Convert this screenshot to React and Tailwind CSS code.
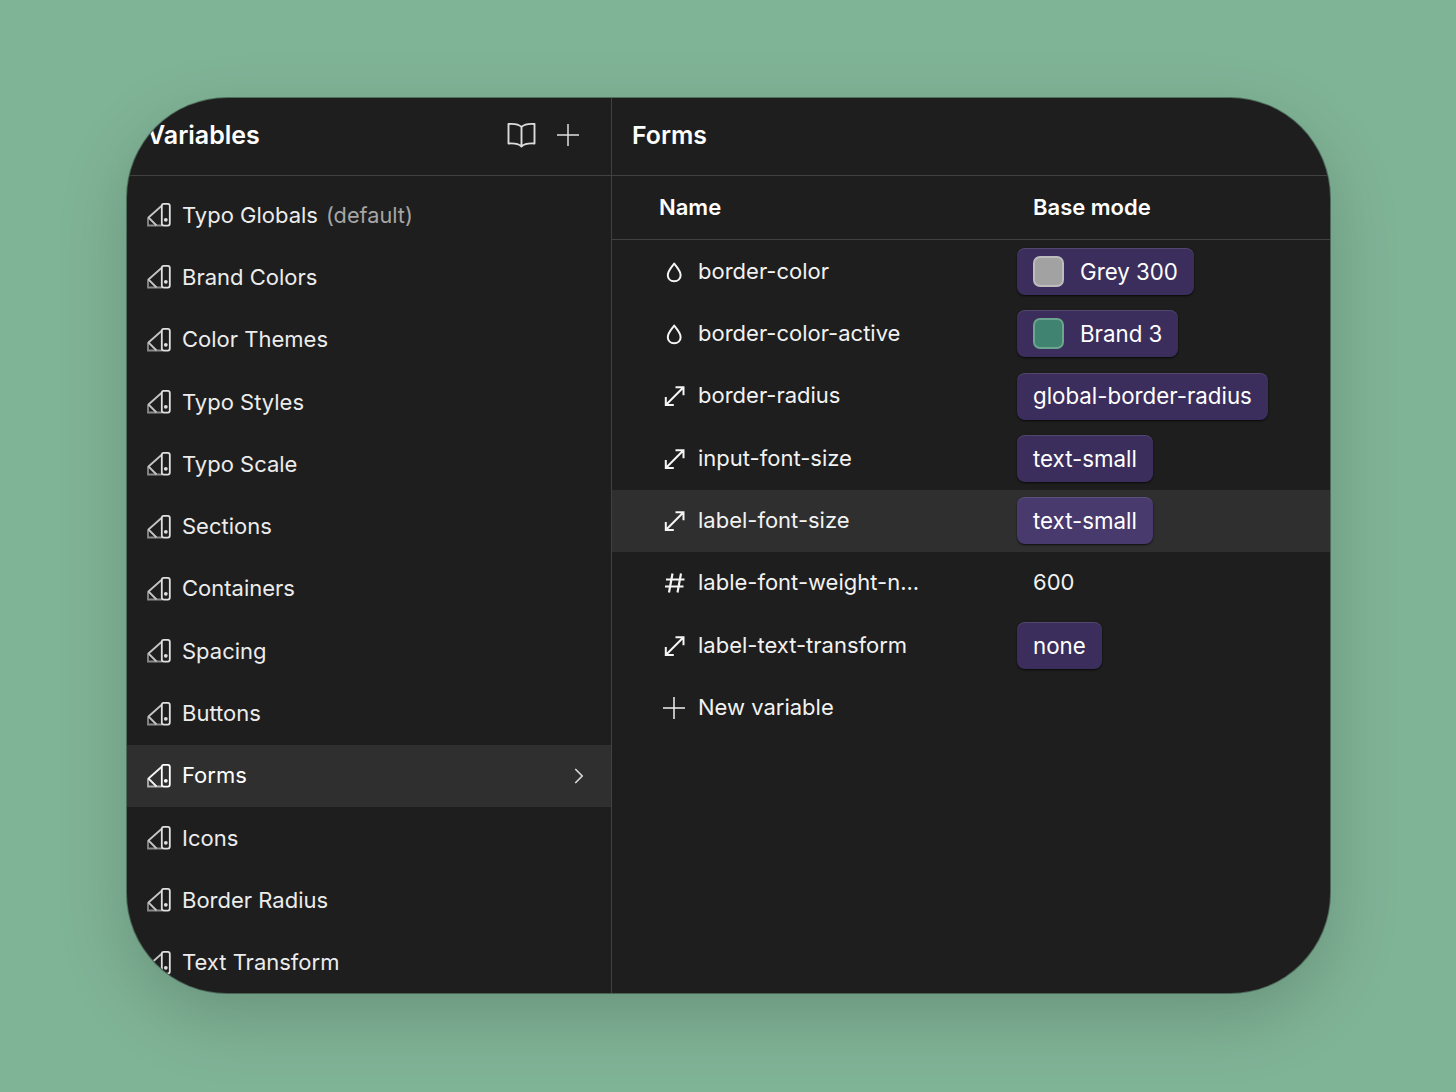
import { ChevronRight } from 'lucide-react';

const collections = [
  'Typo Globals',
  'Brand Colors',
  'Color Themes',
  'Typo Styles',
  'Typo Scale',
  'Sections',
  'Containers',
  'Spacing',
  'Buttons',
  'Forms',
  'Icons',
  'Border Radius',
  'Text Transform',
];

const variables = [
  { name: 'border-color', icon: 'drop', chip: 'Grey 300', swatch: 'grey' },
  { name: 'border-color-active', icon: 'drop', chip: 'Brand 3', swatch: 'green' },
  { name: 'border-radius', icon: 'size', chip: 'global-border-radius' },
  { name: 'input-font-size', icon: 'size', chip: 'text-small' },
  { name: 'label-font-size', icon: 'size', chip: 'text-small', active: true },
  { name: 'lable-font-weight-n...', icon: 'hash', value: '600' },
  { name: 'label-text-transform', icon: 'size', chip: 'none' },
];

function SwatchIcon({ active }) {
  return (
    <svg width="24" height="24" viewBox="0 0 24 24" fill="none" className="shrink-0">
      <path d="M1 14.5V22.5H15" stroke={active ? '#b0b0b0' : '#8a8a8a'} strokeWidth="1.8" />
      <path d="M15 2.5L1.5 14.5L9.5 22.5" stroke={active ? '#f2f2f2' : '#c4c4c4'} strokeWidth="1.8" strokeLinejoin="round" />
      <rect x="14.8" y="0.9" width="8" height="21.7" rx="2" stroke={active ? '#ffffff' : '#e0e0e0'} strokeWidth="1.8" />
      <circle cx="18.8" cy="16.8" r="1.9" fill={active ? '#ffffff' : '#e0e0e0'} />
    </svg>
  );
}

function VariableIcon({ type }) {
  if (type === 'drop') {
    return (
      <svg width="24" height="24" viewBox="0 0 24 24" fill="none" stroke="#f5f5f5" strokeWidth="2">
        <path d="M12.2 3.5C9.5 7.5 5.8 10.8 5.8 15.2C5.8 18.8 8.6 21.3 12.2 21.3C15.8 21.3 18.6 18.8 18.6 15.2C18.6 10.8 14.9 7.5 12.2 3.5Z" strokeLinejoin="round" />
      </svg>
    );
  }
  if (type === 'size') {
    return (
      <svg width="24" height="24" viewBox="0 0 24 24" fill="none" stroke="#f5f5f5" strokeWidth="2">
        <path d="M3.8 21L21.5 3.2M13.5 3.2H21.5V11.2M3.8 13V21H11.8" />
      </svg>
    );
  }
  if (type === 'hash') {
    return (
      <svg width="24" height="24" viewBox="0 0 24 24" fill="none" stroke="#f5f5f5" strokeWidth="2.2">
        <path d="M10.5 2.5L7 21.5M19 2.5L15.5 21.5M4 8.5H22.5M3 15.5H21.5" />
      </svg>
    );
  }
  return (
    <svg width="24" height="24" viewBox="0 0 24 24" fill="none" stroke="#f0f0f0" strokeWidth="1.5">
      <path d="M12 1V23M1 12H23" />
    </svg>
  );
}

function Chip({ label, swatch, active }) {
  return (
    <div className={`flex h-[47px] items-center gap-4 rounded-lg px-4 text-[22.3px] text-white shadow-[0_1px_2px_rgba(0,0,0,0.7),inset_0_1px_0_rgba(255,255,255,0.12)] ${active ? 'bg-[#483a6c]' : 'bg-[#3b2e5c]'}`}>
      {swatch === 'grey' && <span className="size-[31px] rounded-[7px] border-2 border-[#bdbdbd] bg-[#a2a2a2]" />}
      {swatch === 'green' && <span className="size-[31px] rounded-[7px] border-2 border-[#6ba48f] bg-[#3f8370]" />}
      <span>{label}</span>
    </div>
  );
}

export default function App() {
  return (
    <div className="h-[1092px] overflow-hidden bg-[#80b497] pl-[127px] pt-[98px] font-['Inter',sans-serif] text-[22px] leading-[30px]">
      <div className="flex h-[895px] w-[1203px] overflow-hidden rounded-[100px] bg-[#1e1e1e] shadow-[0_0_0_1px_rgba(0,0,0,0.35),0_24px_70px_rgba(0,0,0,0.18)]">
        <aside className="flex w-[485px] shrink-0 flex-col border-r border-[#414141]">
          <header className="flex h-[78px] shrink-0 items-center justify-between border-b border-[#414141] pb-[3px] pl-5 pr-[31px]">
            <h2 className="text-[25px] font-semibold text-white">Variables</h2>
            <div className="flex items-center gap-[20px]">
              <svg width="29" height="26" viewBox="0 0 29 26" fill="none" stroke="#dcdcdc" strokeWidth="1.9">
                <path d="M14.5 5C12 2.5 8 1.5 1.5 2V21.5C8 21 12 22 14.5 24.5C17 22 21 21 27.5 21.5V2C21 1.5 17 2.5 14.5 5ZM14.5 5V24.5" strokeLinejoin="round" />
              </svg>
              <svg width="24" height="24" viewBox="0 0 24 24" fill="none" stroke="#e0e0e0" strokeWidth="1.5">
                <path d="M12 1V23M1 12H23" />
              </svg>
            </div>
          </header>
          <ul className="flex flex-col pt-2">
            {collections.map((name, i) => {
              const active = name === 'Forms';
              return (
                <li key={name} className={`flex h-[62.3px] shrink-0 items-center gap-[11px] pl-5 pr-[19px] ${active ? 'bg-[#2f2f2f] text-white' : 'text-[#ececec]'}`}>
                  <SwatchIcon active={active} />
                  <span className="pb-px">{name}</span>
                  {i === 0 && <span className="ml-[-3px] pb-px text-[21.7px] text-[#a6a6a6]">(default)</span>}
                  {active && <ChevronRight size={26} strokeWidth={1.6} className="ml-auto text-[#d8d8d8]" />}
                </li>
              );
            })}
          </ul>
        </aside>

        <main className="min-w-0 flex-1">
          <header className="flex h-[78px] items-center border-b border-[#414141] pb-[3px] pl-5">
            <h2 className="text-[24.8px] font-semibold text-white">Forms</h2>
          </header>
          <div className="flex h-[64.4px] items-center border-b border-[#414141] pb-[2px] pl-[47px] font-semibold text-white">
            <span className="w-[374px]">Name</span>
            <span>Base mode</span>
          </div>
          {variables.map((row) => (
            <div key={row.name} className={`flex h-[62.35px] items-center pl-[50px] text-[#f2f2f2] ${row.active ? 'bg-[#2f2f2f]' : ''}`}>
              <VariableIcon type={row.icon} />
              <span className="ml-3 w-[319px] shrink-0 pb-[2px]">{row.name}</span>
              {row.chip ? (
                <Chip label={row.chip} swatch={row.swatch} active={row.active} />
              ) : (
                <span className="pb-[2px] pl-4">{row.value}</span>
              )}
            </div>
          ))}
          <div className="flex h-[62.35px] items-center pl-[50px] text-[#f2f2f2]">
            <VariableIcon type="plus" />
            <span className="ml-3 pb-[2px]">New variable</span>
          </div>
        </main>
      </div>
    </div>
  );
}
